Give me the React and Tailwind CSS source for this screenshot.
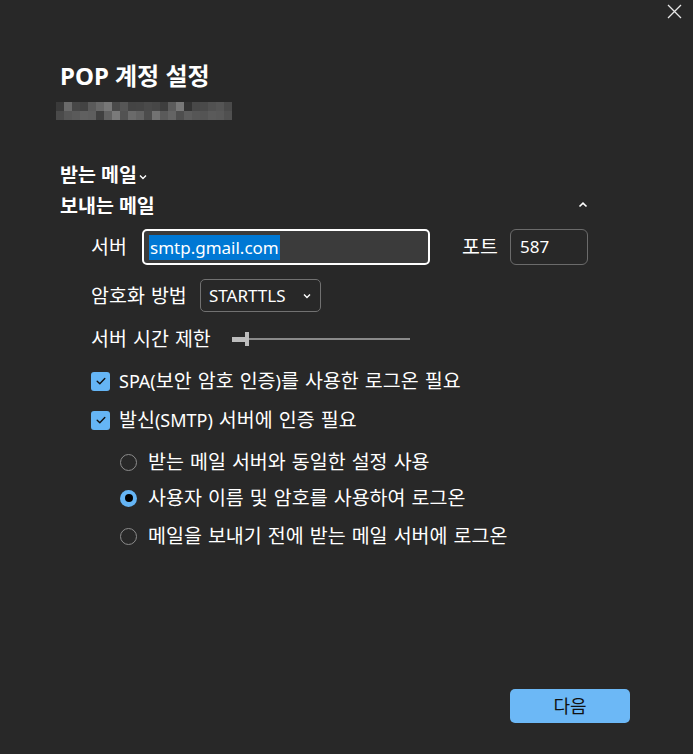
import React from "react";

const mosaic = [
  ["#3a3a3a","#6a6a6a","#474747","#434343","#5a5a5a","#686868","#777777","#4a4a4a","#565656","#444444","#454545","#4a4a4a","#474747","#3e3e3e","#5c5c5c","#787878","#333333","#484848","#4a4a4a","#515151","#555555","#4a4a4a"],
  ["#4a4a4a","#565656","#5a5a5a","#606060","#5e5e5e","#404040","#616161","#7a7a7a","#525252","#6a6a6a","#626262","#4c4c4c","#727272","#5a5a5a","#646464","#4e4e4e","#5c5c5c","#565656","#545454","#5a5a5a","#585858","#505050"],
];

function Check() {
  return (
    <span className="w-[19px] h-[19px] rounded-[3px] bg-[#65b5f5] flex items-center justify-center shrink-0">
      <svg width="12" height="12" viewBox="0 0 12 12" fill="none">
        <path d="M2.2 6.2 L4.8 8.7 L9.8 3.5" stroke="#111" strokeWidth="1.4" strokeLinecap="round" strokeLinejoin="round" />
      </svg>
    </span>
  );
}

function Radio({ on }) {
  return on ? (
    <span className="w-[17px] h-[17px] rounded-full bg-[#65b5f5] flex items-center justify-center shrink-0">
      <span className="w-[8px] h-[8px] rounded-full bg-black" />
    </span>
  ) : (
    <span className="w-[17px] h-[17px] rounded-full border-[1.5px] border-[#8c8c8c] shrink-0" />
  );
}

const L = ({ children }) => <span className="text-[18px]">{children}</span>;

export default function App() {
  const font = { fontFamily: '"Noto Sans", "Noto Sans CJK KR", sans-serif' };
  return (
    <div className="w-[693px] h-[754px] bg-[#282828] text-white relative overflow-hidden flex flex-col" style={font}>
      <button className="absolute right-[11px] top-[3px] w-[16px] h-[16px] flex items-center justify-center">
        <svg width="15" height="15" viewBox="0 0 15 15" fill="none">
          <path d="M1 1 L14 14 M14 1 L1 14" stroke="#e8e8e8" strokeWidth="1.3" />
        </svg>
      </button>

      <div className="pl-[60px] pt-[60px] flex flex-col">
        <h1 className="text-[24px] h-[32px] leading-[32px] font-bold">POP 계정 설정</h1>
        <div className="mt-[10px] ml-[-4px] flex flex-col w-[176px]">
          {mosaic.map((row, i) => (
            <div key={i} className="flex h-[9px]">
              {row.map((c, j) => (
                <span key={j} className="w-[8px] h-[9px]" style={{ background: c }} />
              ))}
            </div>
          ))}
        </div>

        <div className="mt-[42px] h-[26px] flex items-center text-[19.5px] font-bold">
          <span>받는 메일</span>
          <svg width="10" height="10" viewBox="0 0 10 10" fill="none" className="ml-[1px] mt-[3px]">
            <path d="M2 3.5 L5 6.5 L8 3.5" stroke="#fff" strokeWidth="1.4" />
          </svg>
        </div>
        <div className="mt-[5px] h-[26px] flex items-center justify-between pr-[104px] text-[19.5px] font-bold">
          <span>보내는 메일</span>
          <svg width="12" height="10" viewBox="0 0 12 10" fill="none" className="mt-[-2px]">
            <path d="M2.5 6.5 L6 3.2 L9.5 6.5" stroke="#fff" strokeWidth="1.6" />
          </svg>
        </div>

        <div className="pl-[31px] flex flex-col text-[19.5px] [word-spacing:1px]">
          <div className="mt-[10px] flex items-center h-[36px]">
            <span className="w-[51px]">서버</span>
            <div className="w-[288px] h-[36px] rounded-[5px] border-2 border-white bg-[#3b3b3b] flex items-center pl-[5px]">
              <span className="bg-[#0078d4] text-[17px] leading-[25px] px-[1px]">smtp.gmail.com</span>
            </div>
            <span className="ml-[32px] w-[48px]">포트</span>
            <div className="w-[78px] h-[36px] rounded-[6px] border border-[#6b6b6b] flex items-center pl-[9px] text-[17px]">587</div>
          </div>

          <div className="mt-[14px] flex items-center h-[33px]">
            <span className="w-[109px]">암호화 방법</span>
            <div className="w-[121px] h-[33px] rounded-[5px] border border-[#717171] flex items-center pl-[8px] pr-[8px] justify-between">
              <span className="text-[17px]">STARTTLS</span>
              <svg width="10" height="10" viewBox="0 0 10 10" fill="none">
                <path d="M2 3.5 L5 6.5 L8 3.5" stroke="#fff" strokeWidth="1.4" />
              </svg>
            </div>
          </div>

          <div className="mt-[15px] flex items-center h-[24px]">
            <span className="w-[141px]">서버 시간 제한</span>
            <div className="relative w-[178px] h-[16px] flex items-center">
              <div className="w-[14px] h-[5px] bg-[#bdbdbd]" />
              <div className="flex-1 h-[2px] bg-[#8a8a8a]" />
              <div className="absolute left-[13px] top-[1px] w-[4px] h-[14px] bg-[#bdbdbd]" />
            </div>
          </div>

          <div className="mt-[18px] flex items-center gap-[9px] h-[24px]">
            <Check />
            <span><L>SPA(</L>보안 암호 인증<L>)</L>를 사용한 로그온 필요</span>
          </div>
          <div className="mt-[15px] flex items-center gap-[9px] h-[24px]">
            <Check />
            <span>발신<L>(SMTP)</L> 서버에 인증 필요</span>
          </div>

          <div className="pl-[29px] flex flex-col">
            <div className="mt-[18px] flex items-center gap-[11px] h-[24px]">
              <Radio />
              <span>받는 메일 서버와 동일한 설정 사용</span>
            </div>
            <div className="mt-[12px] flex items-center gap-[11px] h-[24px]">
              <Radio on />
              <span>사용자 이름 및 암호를 사용하여 로그온</span>
            </div>
            <div className="mt-[14px] flex items-center gap-[11px] h-[24px]">
              <Radio />
              <span>메일을 보내기 전에 받는 메일 서버에 로그온</span>
            </div>
          </div>
        </div>
      </div>

      <div className="flex-1" />
      <div className="flex justify-end pr-[63px] pb-[31px]">
        <button className="w-[120px] h-[34px] rounded-[5px] bg-[#6cb8f6] text-[#111] text-[18px]">다음</button>
      </div>
    </div>
  );
}
